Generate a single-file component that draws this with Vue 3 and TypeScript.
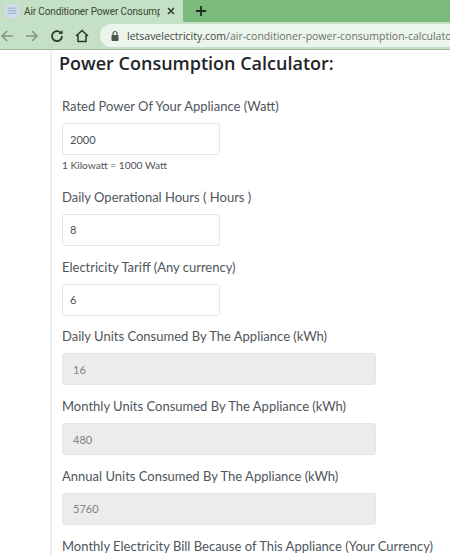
<script setup lang="ts">
interface Field {
  label: string;
  value: string;
  note?: string;
  readonly?: boolean;
}

const fields: Field[] = [
  { label: 'Rated Power Of Your Appliance (Watt)', value: '2000', note: '1 Kilowatt = 1000 Watt' },
  { label: 'Daily Operational Hours ( Hours )', value: '8' },
  { label: 'Electricity Tariff (Any currency)', value: '6' },
  { label: 'Daily Units Consumed By The Appliance (kWh)', value: '16', readonly: true },
  { label: 'Monthly Units Consumed By The Appliance (kWh)', value: '480', readonly: true },
  { label: 'Annual Units Consumed By The Appliance (kWh)', value: '5760', readonly: true },
];
</script>

<template>
  <div class="window">
    <div class="tabstrip">
      <div class="tab">
        <svg class="favicon" width="14" height="14" viewBox="0 0 16 16" aria-hidden="true">
          <rect width="16" height="16" fill="#d3dbe8" />
          <path d="M3 5c2-1.500 3 1 5 0s3-1 5 0M3 8c2-1.500 3 1 5 0s3-1 5 0M3 11c2-1.500 3 1 5 0s3-1 5 0" fill="none" stroke="#8fb0d8" stroke-width="1.200" />
        </svg>
        <span class="tab-title">Air Conditioner Power Consumpt</span>
        <svg class="tab-close" width="10" height="10" viewBox="0 0 10 10" aria-hidden="true">
          <path d="M2 2l6 6M8 2l-6 6" stroke="#2b3a2b" stroke-width="1.500" />
        </svg>
      </div>
      <svg class="new-tab" width="12" height="12" viewBox="0 0 12 12" aria-hidden="true">
        <path d="M6 1v10M1 6h10" stroke="#1f2b1f" stroke-width="1.800" />
      </svg>
    </div>

    <div class="toolbar">
      <svg width="14" height="14" viewBox="0 0 14 14" aria-hidden="true">
        <path d="M13 7H2M7 2L2 7l5 5" fill="none" stroke="#82977f" stroke-width="1.500" />
      </svg>
      <svg width="14" height="14" viewBox="0 0 14 14" aria-hidden="true">
        <path d="M1 7h11M7 2l5 5-5 5" fill="none" stroke="#82977f" stroke-width="1.500" />
      </svg>
      <svg width="14" height="14" viewBox="0 0 14 14" aria-hidden="true">
        <path d="M12 7a5 5 0 1 1-1.500-3.500" fill="none" stroke="#2c382c" stroke-width="1.700" />
        <path d="M12.500 1v4h-4z" fill="#2c382c" />
      </svg>
      <svg width="14" height="14" viewBox="0 0 14 14" aria-hidden="true">
        <path d="M1 7l6-5.500L13 7M3 6v6.500h8V6" fill="none" stroke="#2c382c" stroke-width="1.500" />
      </svg>
      <div class="omnibox">
        <svg class="lock" width="10" height="12" viewBox="0 0 10 12" aria-hidden="true">
          <rect x="1.500" y="5" width="7" height="6" rx="1" fill="#4b574b" />
          <path d="M3 5V3.500a2 2 0 0 1 4 0V5" fill="none" stroke="#4b574b" stroke-width="1.200" />
        </svg>
        <span class="url"><span class="host">letsavelectricity.com</span>/air-conditioner-power-consumption-calculator</span>
      </div>
    </div>

    <main class="page">
      <h2 class="title">Power Consumption Calculator:</h2>
      <form class="form" @submit.prevent>
        <div v-for="field in fields" :key="field.label" class="group">
          <label class="label">{{ field.label }}</label>
          <input
            class="input"
            :class="{ readonly: field.readonly }"
            :value="field.value"
            :readonly="field.readonly"
          />
          <small v-if="field.note" class="note">{{ field.note }}</small>
        </div>
        <label class="label">Monthly Electricity Bill Because of This Appliance (Your Currency)</label>
      </form>
    </main>
  </div>
</template>

<style>
html,
body {
  margin: 0;
  overflow: hidden;
  background: #fff;
}
</style>

<style scoped>
.window {
  width: 450px;
  height: 555px;
  overflow: hidden;
  display: flex;
  flex-direction: column;
  font-family: Lato, "Noto Sans", sans-serif;
}

.tabstrip {
  height: 22px;
  flex-shrink: 0;
  display: flex;
  align-items: center;
  background: #7aba7a;
}

.tab {
  width: 183px;
  height: 100%;
  box-sizing: border-box;
  padding: 0 6px 0 5px;
  display: flex;
  align-items: center;
  background: #c5e1c5;
}

.favicon {
  flex-shrink: 0;
}

.tab-title {
  margin-left: 5px;
  width: 136px;
  overflow: hidden;
  white-space: nowrap;
  font: 10px Roboto, sans-serif;
  letter-spacing: -0.130px;
  color: #3a463a;
}

.tab-close {
  margin-left: 6px;
  flex-shrink: 0;
}

.new-tab {
  margin-left: 12px;
}

.toolbar {
  height: 28px;
  flex-shrink: 0;
  box-sizing: border-box;
  display: flex;
  align-items: center;
  gap: 11px;
  background: #c5e1c5;
  border-bottom: 1px solid #9fb79f;
}

.omnibox {
  flex: 1;
  height: 23px;
  padding-left: 10px;
  display: flex;
  align-items: center;
  gap: 7px;
  overflow: hidden;
  white-space: nowrap;
  background: #ecf5ec;
  border-radius: 12px 0 0 12px;
}

.lock {
  flex-shrink: 0;
}

.url {
  font: 10.500px "Open Sans", sans-serif;
  color: #6a736a;
}

.host {
  color: #3c463c;
}

.page {
  flex: 1;
  margin-left: 50px;
  border-left: 2px solid #eee;
  padding-left: 7px;
  overflow: hidden;
}

.title {
  margin: 0;
  font: 600 18px/26px "Open Sans", sans-serif;
  color: #212529;
}

.form {
  margin-top: 18px;
  padding-left: 3px;
}

.group {
  margin-bottom: 8.800px;
}

.label {
  display: block;
  height: 24px;
  margin-bottom: 5px;
  font-size: 13px;
  line-height: 24px;
  color: #4f555b;
  white-space: nowrap;
}

.input {
  display: block;
  width: 158px;
  height: 32px;
  box-sizing: border-box;
  padding: 0 7px;
  font: 11px Lato, sans-serif;
  color: #495057;
  background: #fff;
  border: 1px solid #e3e6ea;
  border-radius: 3px;
  outline: none;
}

.input.readonly {
  width: 314px;
  padding-left: 10px;
  color: #7c8187;
  background: #ececec;
}

.note {
  display: block;
  margin-top: 3px;
  padding-bottom: 4px;
  font-size: 10.200px;
  line-height: 14px;
  color: #4c5258;
}
</style>
